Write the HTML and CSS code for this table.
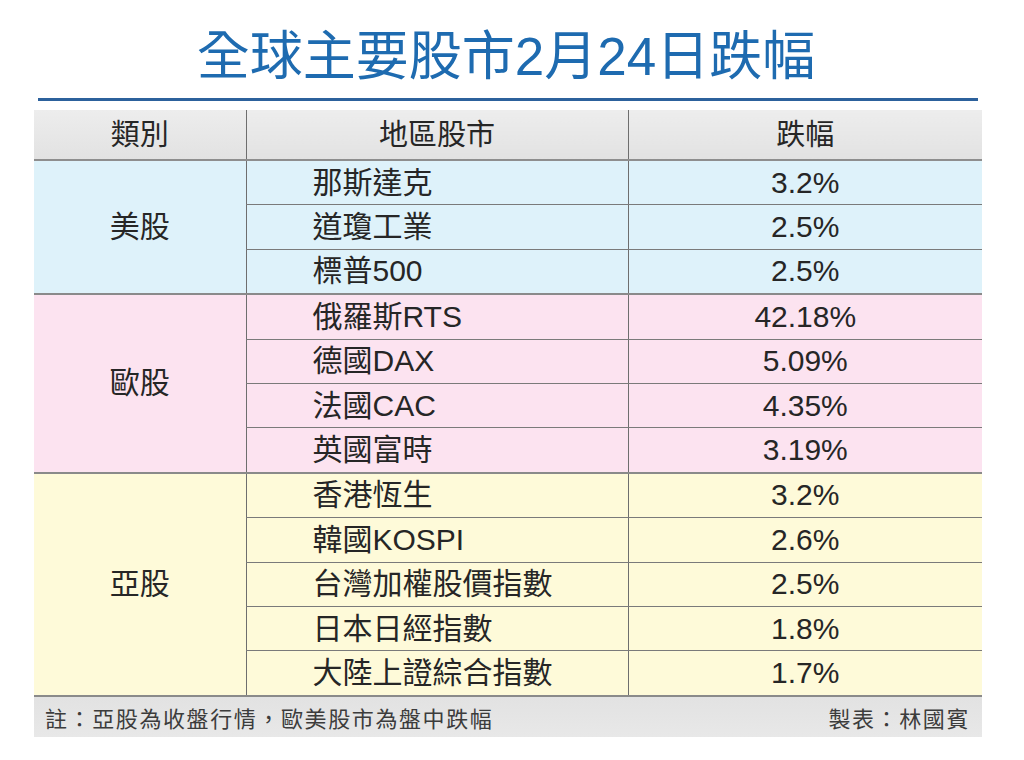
FILE: index.html
```html
<!DOCTYPE html>
<html lang="zh-Hant">
<head>
<meta charset="utf-8">
<title>全球主要股市2月24日跌幅</title>
<link rel="stylesheet" href="styles.css">
</head>
<body>
<div class="page">
  <h1 class="title">全球主要股市2月24日跌幅</h1>
  <div class="rule"></div>
  <table class="stocks">
    <colgroup>
      <col class="c1"><col class="c2"><col class="c3">
    </colgroup>
    <thead>
      <tr><th>類別</th><th>地區股市</th><th>跌幅</th></tr>
    </thead>
    <tbody class="us">
      <tr><td class="cat" rowspan="3">美股</td><td class="mkt">那斯達克</td><td class="pct">3.2%</td></tr>
      <tr><td class="mkt">道瓊工業</td><td class="pct">2.5%</td></tr>
      <tr class="last"><td class="mkt">標普500</td><td class="pct">2.5%</td></tr>
    </tbody>
    <tbody class="eu">
      <tr><td class="cat" rowspan="4">歐股</td><td class="mkt">俄羅斯RTS</td><td class="pct">42.18%</td></tr>
      <tr><td class="mkt">德國DAX</td><td class="pct">5.09%</td></tr>
      <tr><td class="mkt">法國CAC</td><td class="pct">4.35%</td></tr>
      <tr class="last"><td class="mkt">英國富時</td><td class="pct">3.19%</td></tr>
    </tbody>
    <tbody class="asia">
      <tr><td class="cat" rowspan="5">亞股</td><td class="mkt">香港恆生</td><td class="pct">3.2%</td></tr>
      <tr><td class="mkt">韓國KOSPI</td><td class="pct">2.6%</td></tr>
      <tr><td class="mkt">台灣加權股價指數</td><td class="pct">2.5%</td></tr>
      <tr><td class="mkt">日本日經指數</td><td class="pct">1.8%</td></tr>
      <tr class="last"><td class="mkt">大陸上證綜合指數</td><td class="pct">1.7%</td></tr>
    </tbody>
  </table>
  <div class="foot">
    <span>註：亞股為收盤行情，歐美股市為盤中跌幅</span>
    <span>製表：林國賓</span>
  </div>
</div>
</body>
</html>
```

FILE: styles.css
```css
html, body {
  margin: 0;
  padding: 0;
  background: #ffffff;
}

body {
  font-family: "Liberation Sans", "Noto Sans CJK TC", sans-serif;
  color: #262626;
}

.page {
  width: 1024px;
  height: 760px;
  padding-top: 27px;
  box-sizing: border-box;
}

.title {
  margin: 0;
  padding-right: 12px;
  text-align: center;
  font-size: 53px;
  font-weight: 400;
  line-height: 60px;
  color: #1e6bb0;
}

.rule {
  height: 3px;
  margin: 11px 46px 0 38px;
  background: #2c619c;
}

.stocks {
  margin: 9px 0 0 34px;
  width: 948px;
  border-collapse: collapse;
  table-layout: fixed;
  font-size: 30px;
}

.c1 { width: 212px; }
.c2 { width: 382px; }
.c3 { width: 354px; }

.stocks th {
  height: 49px;
  padding: 0;
  line-height: 30px;
  font-weight: 400;
  text-align: center;
  font-size: 29px;
  background: linear-gradient(#ededed, #e2e2e2);
  border-bottom: 2px solid #8e8e8e;
  vertical-align: middle;
}

.stocks th + th {
  border-left: 1px solid #6e6e6e;
}

.stocks td {
  height: 43.4px;
  padding: 0;
  line-height: 30px;
  border-bottom: 1px solid #7a7a7a;
  white-space: nowrap;
  vertical-align: middle;
}

.stocks tr.last td {
  border-bottom: 2px solid #8a8a8a;
}

.stocks td.cat {
  text-align: center;
  border-bottom: 2px solid #8a8a8a;
}

.stocks td.mkt {
  border-left: 1px solid #6e6e6e;
  padding-left: 66px;
}

.stocks td.pct {
  border-left: 1px solid #6e6e6e;
  text-align: center;
}

.us td { background: #def2fa; }
.eu td { background: #fce3f0; }
.asia td { background: #fefad9; }

.asia tr.last td,
.asia td.cat {
  border-bottom: 0;
}

.foot {
  margin-left: 34px;
  width: 948px;
  height: 42px;
  box-sizing: border-box;
  padding: 0 12px 0 11px;
  background: linear-gradient(#e2e2e2, #e8e8e8);
  border-top: 2px solid #8a8a8a;
  display: flex;
  justify-content: space-between;
  align-items: center;
  font-size: 22px;
  line-height: 26px;
  letter-spacing: 1.6px;
  color: #3c3c3c;
  font-family: "Noto Sans CJK TC", sans-serif;
}
```
